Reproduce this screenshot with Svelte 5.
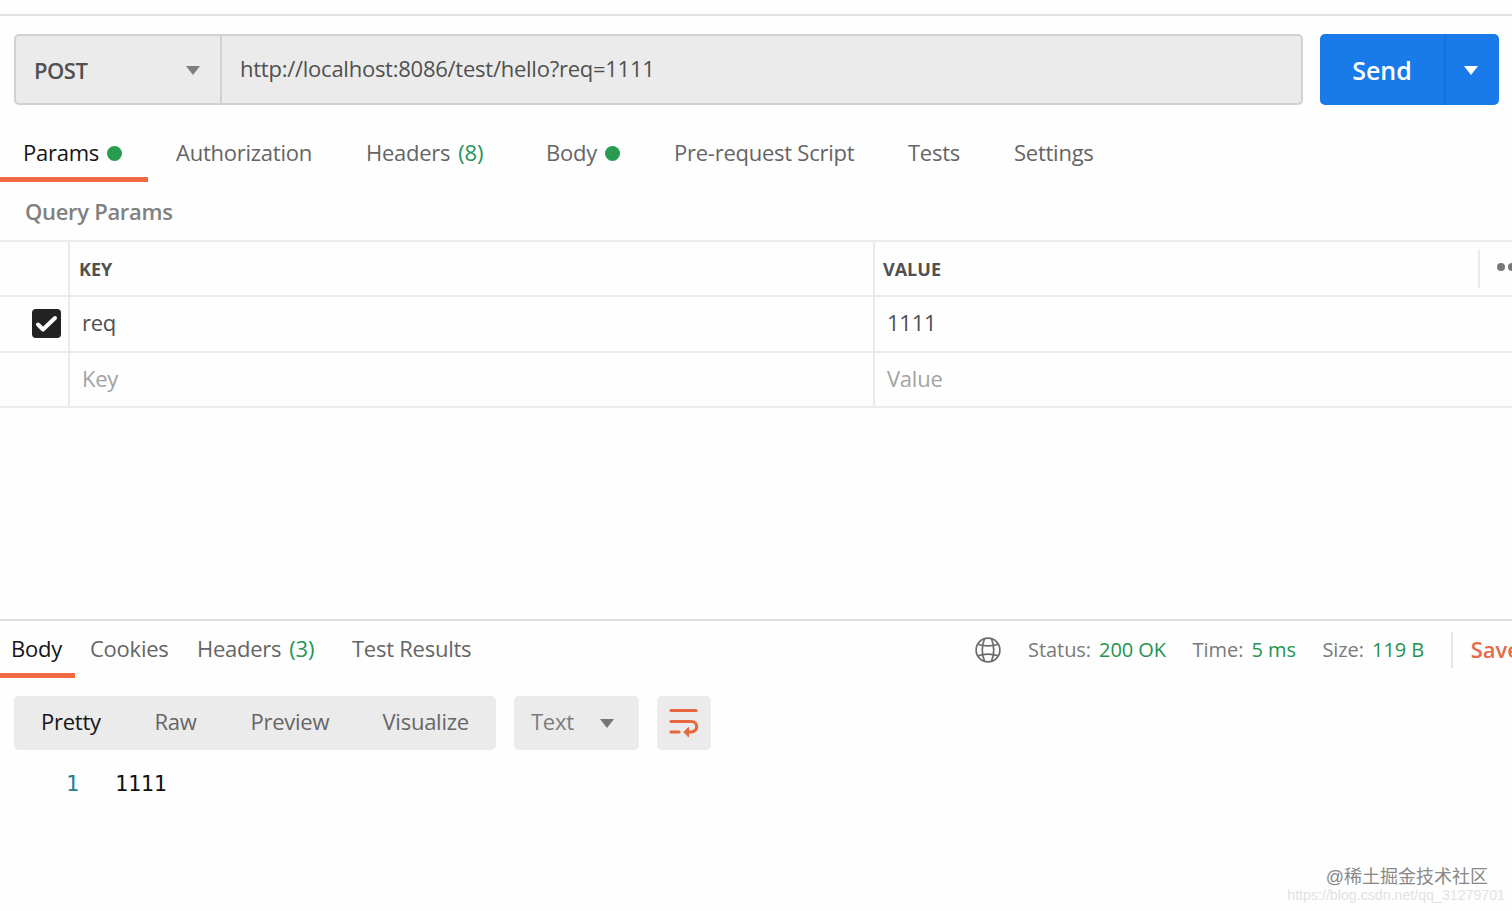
<script>
  let requestTabs = [
    { name: 'Params', dot: true },
    { name: 'Authorization' },
    { name: 'Headers', count: 8 },
    { name: 'Body', dot: true },
    { name: 'Pre-request Script' },
    { name: 'Tests' },
    { name: 'Settings' }
  ];
  let responseTabs = [
    { name: 'Body' },
    { name: 'Cookies' },
    { name: 'Headers', count: 3 },
    { name: 'Test Results' }
  ];
  let meta = [
    { label: 'Status:', value: '200 OK' },
    { label: 'Time:', value: '5 ms' },
    { label: 'Size:', value: '119 B' }
  ];
  let views = ['Pretty', 'Raw', 'Preview', 'Visualize'];

  let requestTab = 'Params';
  let responseTab = 'Body';
  let view = 'Pretty';
  let method = 'POST';
  let url = 'http://localhost:8086/test/hello?req=1111';
  let checked = true;
</script>

<main>
  <div class="urlbar">
    <div class="address">
      <div class="method">
        <span>{method}</span>
        <svg width="14" height="9" viewBox="0 0 14 9"><path d="M0 0h14L7 9z" fill="#7d7d7d" /></svg>
      </div>
      <div class="url">{url}</div>
    </div>
    <div class="send">
      <button class="sendmain">Send</button>
      <button class="sendmore" aria-label="Send options">
        <svg width="14" height="9" viewBox="0 0 14 9"><path d="M0 0h14L7 9z" fill="#fff" /></svg>
      </button>
    </div>
  </div>

  <nav class="tabs request">
    {#each requestTabs as tab}
      <button class="tab" class:active={tab.name === requestTab} on:click={() => requestTab = tab.name}>
        {tab.name}
        {#if tab.count}<span class="count">({tab.count})</span>{/if}
        {#if tab.dot}<i class="dot"></i>{/if}
      </button>
    {/each}
  </nav>

  <h2>Query Params</h2>

  <div class="table">
    <div class="row head">
      <div></div>
      <div>KEY</div>
      <div class="last">
        <span>VALUE</span>
        <div class="more"><i></i><i></i><i></i></div>
      </div>
    </div>
    <div class="row">
      <div class="check">
        <button class="box" aria-label="Toggle param" on:click={() => checked = !checked}>
          {#if checked}
            <svg width="29" height="29" viewBox="0 0 29 29"><path d="M6 15.5l5 5L23 9" fill="none" stroke="#fff" stroke-width="4" stroke-linecap="round" stroke-linejoin="round" /></svg>
          {/if}
        </button>
      </div>
      <div>req</div>
      <div>1111</div>
    </div>
    <div class="row empty">
      <div></div>
      <div>Key</div>
      <div>Value</div>
    </div>
  </div>

  <section>
    <div class="responsebar">
      <nav class="tabs response">
        {#each responseTabs as tab}
          <button class="tab" class:active={tab.name === responseTab} on:click={() => responseTab = tab.name}>
            {tab.name}
            {#if tab.count}<span class="count">({tab.count})</span>{/if}
          </button>
        {/each}
      </nav>
      <div class="meta">
        <svg class="globe" width="26" height="26" viewBox="0 0 26 26" fill="none" stroke="#6b6b6b" stroke-width="1.7">
          <circle cx="13" cy="13" r="11.9" />
          <path d="M9.5 1.8C6.8 8.5 6.8 17.5 9.5 24.2M16.5 1.8c2.7 6.7 2.7 15.7 0 22.4" />
          <path d="M3 7.2c5.5 2.2 14.5 2.2 20 0M3 18.8c5.5-2.2 14.5-2.2 20 0" />
        </svg>
        {#each meta as item}
          <div class="item">{item.label}<b>{item.value}</b></div>
        {/each}
        <div class="save">Save</div>
      </div>
    </div>

    <div class="tools">
      <div class="views">
        {#each views as name}
          <button class:active={name === view} on:click={() => view = name}>{name}</button>
        {/each}
      </div>
      <div class="format">
        <span>Text</span>
        <svg width="14" height="9" viewBox="0 0 14 9"><path d="M0 0h14L7 9z" fill="#757575" /></svg>
      </div>
      <div class="wrap">
        <svg width="30" height="30" viewBox="0 0 30 30" fill="none" stroke="#e8663d" stroke-width="3.2" stroke-linecap="round">
          <path d="M2 2.5h25M2 13.5h20.500a5.200 5.200 0 0 1 0 10.500H19M2 24h8" />
          <path d="M15 24l4.500-4.500v9z" fill="#e8663d" stroke-width="1" stroke-linejoin="round" />
        </svg>
      </div>
    </div>

    <div class="code"><span class="line">1</span><span>1111</span></div>
  </section>

  <footer>
    <div class="community">@稀土掘金技术社区</div>
    <div class="blog">https://blog.csdn.net/qq_31279701</div>
  </footer>
</main>

<style>
  :global(body) {
    background: #fefefe;
    overflow: hidden;
  }

  main {
    box-sizing: border-box;
    width: 1512px;
    height: 911px;
    padding-top: 14px;
    overflow: hidden;
    position: relative;
    font-family: "Open Sans", sans-serif;
    font-size: 22px;
    letter-spacing: -0.25px;
    color: #505050;
  }

  button {
    border: none;
    padding: 0;
    margin: 0;
    background: none;
    font: inherit;
    letter-spacing: inherit;
    color: inherit;
    white-space: nowrap;
  }

  svg {
    display: block;
    flex: none;
  }

  .urlbar {
    display: flex;
    justify-content: space-between;
    border-top: 2px solid #e2e2e2;
    padding: 18px 13px 0 14px;
  }

  .address {
    display: flex;
    box-sizing: border-box;
    width: 1289px;
    height: 71px;
    border: 2px solid #d1d1d1;
    border-radius: 5px;
    background: #ebebeb;
  }

  .method {
    display: flex;
    align-items: center;
    justify-content: space-between;
    box-sizing: border-box;
    width: 206px;
    padding: 1px 20px 0 18px;
    border-right: 2px solid #d1d1d1;
    font-weight: 600;
    letter-spacing: -0.5px;
  }

  .url {
    padding-left: 18px;
    line-height: 65px;
  }

  .send {
    display: flex;
    width: 179px;
    height: 71px;
    border-radius: 5px;
    background: #197bea;
    color: #fff;
  }

  .sendmain {
    width: 124px;
    padding-top: 1px;
    font-size: 25px;
    font-weight: 600;
    letter-spacing: 0;
  }

  .sendmore {
    width: 55px;
    padding: 2px 0 0 18px;
    border-left: 2px solid #1571dc;
  }

  .tabs {
    display: grid;
  }

  .request {
    grid-template-columns: 153px 190px 180px 128px 234px 106px 120px;
    height: 77px;
  }

  .tab {
    display: flex;
    align-items: center;
    gap: 8px;
    box-sizing: border-box;
    height: 100%;
    justify-self: start;
    border-bottom: 5px solid transparent;
    color: #656565;
  }

  .request .tab {
    padding: 22px 0 0 23px;
  }

  .tab.active {
    border-bottom-color: #ef6a42;
    color: #151515;
  }

  .request .tab.active {
    width: 148px;
  }

  .count {
    color: #26965a;
  }

  .dot {
    width: 15px;
    height: 15px;
    margin-top: 3px;
    border-radius: 50%;
    background: #289b50;
  }

  h2 {
    margin: 0;
    padding-left: 25px;
    height: 58px;
    line-height: 58px;
    font-size: 22px;
    font-weight: 600;
    letter-spacing: -0.3px;
    color: #808080;
  }

  .table {
    border-top: 2px solid #ebebeb;
  }

  .row {
    display: grid;
    grid-template-columns: 68px 805px 1fr;
    box-sizing: border-box;
    height: 55.34px;
    border-bottom: 2px solid #ebebeb;
    line-height: 51px;
  }

  .row > div + div {
    padding-left: 12px;
    border-left: 2px solid #ebebeb;
  }

  .head {
    font-size: 18px;
    font-weight: 700;
    letter-spacing: 0;
  }

  .row.head > div + div {
    padding-left: 9px;
    line-height: 54px;
  }

  .row.head > .last {
    display: flex;
    justify-content: space-between;
    padding-left: 8px;
  }

  .more {
    display: flex;
    gap: 3px;
    box-sizing: border-box;
    width: 34px;
    height: 39px;
    margin-top: 7px;
    padding: 14px 0 0 17px;
    border-left: 2px solid #ebebeb;
  }

  .more i {
    flex: none;
    width: 8px;
    height: 8px;
    border-radius: 50%;
    background: #777;
  }

  .check {
    padding: 12px 0 0 32px;
  }

  .box {
    display: block;
    width: 29px;
    height: 29px;
    border-radius: 4px;
    background: #222;
  }

  .empty {
    color: #a3a3a3;
  }

  section {
    margin-top: 211px;
    border-top: 2px solid #e0e0e0;
  }

  .responsebar {
    display: flex;
    justify-content: space-between;
    height: 57px;
  }

  .response {
    grid-template-columns: 90px 107px 155px 130px;
  }

  .response .tab {
    padding-top: 3px;
  }

  .response .tab.active {
    width: 75px;
    padding-left: 11px;
  }

  .meta {
    display: flex;
    align-items: center;
    padding-top: 1px;
    width: 537px;
    font-size: 20px;
    letter-spacing: -0.05px;
    color: #7a7a7a;
  }

  .globe {
    margin-right: 27px;
  }

  .item {
    flex: none;
    margin-right: 26.5px;
  }

  .item b {
    margin-left: 8px;
    font-weight: 400;
    color: #259350;
  }

  .save {
    height: 36px;
    padding-left: 18px;
    border-left: 2px solid #e5e5e5;
    line-height: 34px;
    font-size: 22px;
    font-weight: 600;
    color: #e66b47;
  }

  .tools {
    display: flex;
    gap: 18px;
    padding: 18px 14px 0;
  }

  .views {
    display: grid;
    grid-template-columns: 113.5px 96px 132px 113px;
    box-sizing: border-box;
    width: 482px;
    height: 54px;
    padding-left: 27px;
    border-radius: 5px;
    background: #ebebeb;
  }

  .views button {
    justify-self: start;
    padding-bottom: 3px;
    color: #666;
  }

  .views button.active {
    color: #151515;
  }

  .format {
    display: flex;
    align-items: center;
    justify-content: space-between;
    box-sizing: border-box;
    width: 125px;
    padding: 0 25px 0 17px;
    border-radius: 5px;
    background: #ebebeb;
    color: #7b7b7b;
  }

  .format span {
    padding-bottom: 3px;
  }

  .format svg {
    margin-top: 1px;
  }

  .wrap {
    display: grid;
    place-items: center;
    width: 54px;
    border-radius: 5px;
    background: #ebebeb;
  }

  .code {
    display: flex;
    gap: 36px;
    padding: 18px 0 0 66px;
    font-family: "DejaVu Sans Mono", monospace;
    font-size: 21.5px;
    line-height: 32px;
    letter-spacing: 0;
    color: #111;
  }

  .line {
    color: #297b91;
  }

  /* watermark sits above the panel */
  footer {
    position: absolute;
    right: 7px;
    bottom: 8px;
    text-align: right;
    letter-spacing: 0;
  }

  .community {
    margin-right: 17px;
    font-family: "Liberation Sans", "Noto Sans CJK SC", sans-serif;
    font-size: 18px;
    line-height: 20px;
    color: #888;
  }

  .blog {
    font-family: "Liberation Sans", sans-serif;
    font-size: 14.2px;
    line-height: 16px;
    color: #e2e2e2;
  }
</style>
